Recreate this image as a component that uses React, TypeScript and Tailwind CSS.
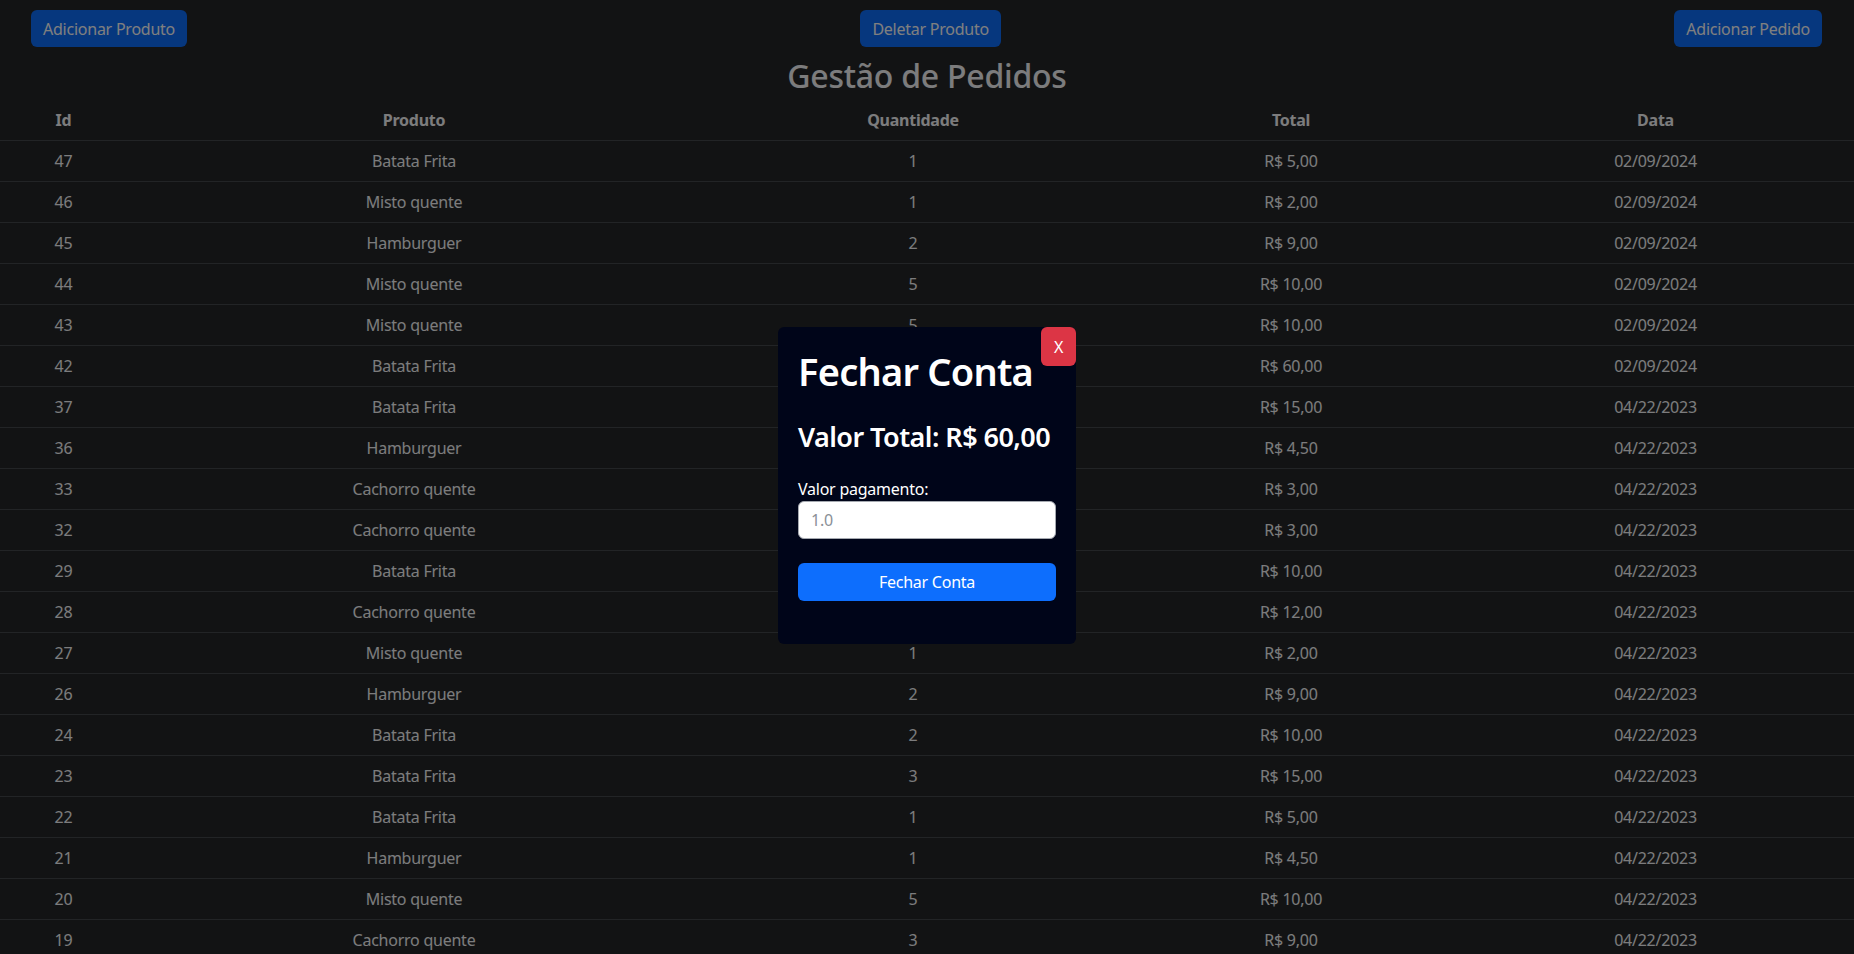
const pedidos = [
  { id: 47, produto: "Batata Frita", qtd: 1, total: "R$ 5,00", data: "02/09/2024" },
  { id: 46, produto: "Misto quente", qtd: 1, total: "R$ 2,00", data: "02/09/2024" },
  { id: 45, produto: "Hamburguer", qtd: 2, total: "R$ 9,00", data: "02/09/2024" },
  { id: 44, produto: "Misto quente", qtd: 5, total: "R$ 10,00", data: "02/09/2024" },
  { id: 43, produto: "Misto quente", qtd: 5, total: "R$ 10,00", data: "02/09/2024" },
  { id: 42, produto: "Batata Frita", qtd: 12, total: "R$ 60,00", data: "02/09/2024" },
  { id: 37, produto: "Batata Frita", qtd: 3, total: "R$ 15,00", data: "04/22/2023" },
  { id: 36, produto: "Hamburguer", qtd: 1, total: "R$ 4,50", data: "04/22/2023" },
  { id: 33, produto: "Cachorro quente", qtd: 1, total: "R$ 3,00", data: "04/22/2023" },
  { id: 32, produto: "Cachorro quente", qtd: 1, total: "R$ 3,00", data: "04/22/2023" },
  { id: 29, produto: "Batata Frita", qtd: 2, total: "R$ 10,00", data: "04/22/2023" },
  { id: 28, produto: "Cachorro quente", qtd: 4, total: "R$ 12,00", data: "04/22/2023" },
  { id: 27, produto: "Misto quente", qtd: 1, total: "R$ 2,00", data: "04/22/2023" },
  { id: 26, produto: "Hamburguer", qtd: 2, total: "R$ 9,00", data: "04/22/2023" },
  { id: 24, produto: "Batata Frita", qtd: 2, total: "R$ 10,00", data: "04/22/2023" },
  { id: 23, produto: "Batata Frita", qtd: 3, total: "R$ 15,00", data: "04/22/2023" },
  { id: 22, produto: "Batata Frita", qtd: 1, total: "R$ 5,00", data: "04/22/2023" },
  { id: 21, produto: "Hamburguer", qtd: 1, total: "R$ 4,50", data: "04/22/2023" },
  { id: 20, produto: "Misto quente", qtd: 5, total: "R$ 10,00", data: "04/22/2023" },
  { id: 19, produto: "Cachorro quente", qtd: 3, total: "R$ 9,00", data: "04/22/2023" },
  { id: 18, produto: "Batata Frita", qtd: 1, total: "R$ 5,00", data: "04/22/2023" },
];

const cols = "grid grid-cols-[127px_574px_424px_332px_1fr] text-center";

export default function App() {
  return (
    <div className="min-h-screen bg-[#242629] font-['Noto_Sans',sans-serif] text-[16px] leading-6 tracking-[-0.015em] text-[#f8f9fa]">
      <div className="flex justify-between pt-[10px] pl-[31px] pr-[32px]">
        <button className="h-[37px] rounded-md bg-[#0d6efd] px-3 text-white">Adicionar Produto</button>
        <button className="h-[37px] rounded-md bg-[#0d6efd] px-3 text-white">Deletar Produto</button>
        <button className="h-[37px] rounded-md bg-[#0d6efd] px-3 text-white">Adicionar Pedido</button>
      </div>

      <h2 className="mt-[10px] mb-[5px] text-center text-[32px] leading-[1.2] font-medium">Gestão de Pedidos</h2>

      <div className={`${cols} border-b border-[#45494d] py-2 font-bold`}>
        <div>Id</div>
        <div>Produto</div>
        <div>Quantidade</div>
        <div>Total</div>
        <div>Data</div>
      </div>
      {pedidos.map((p) => (
        <div key={p.id} className={`${cols} border-b border-[#45494d] py-2`}>
          <div>{p.id}</div>
          <div>{p.produto}</div>
          <div>{p.qtd}</div>
          <div>{p.total}</div>
          <div>{p.data}</div>
        </div>
      ))}

      {/* backdrop + modal */}
      <div className="fixed inset-0 bg-black/50">
        <div className="mx-auto mt-[327px] w-[298px]">
          <div className="relative rounded-md bg-[#000519] px-5 pt-5 pb-[43px] text-white">
            <button className="absolute top-0 right-0 flex h-[39px] w-[35px] items-center justify-center rounded-md bg-[#dc3545] text-white">
              X
            </button>
            <h1 className="text-[38px] leading-[48px] font-semibold tracking-[-0.02em]">Fechar Conta</h1>
            <h3 className="mt-[25px] text-[27px] leading-[34px] font-semibold whitespace-nowrap tracking-[-0.02em]">
              Valor Total: R$ 60,00
            </h3>
            <label className="mt-[23px] block">Valor pagamento:</label>
            <input
              className="block h-[38px] w-full rounded-md border border-[#a5a9b0] bg-white px-3 text-[#212529] placeholder:text-[#8a9097]"
              placeholder="1.0"
            />
            <button className="mt-6 h-[38px] w-full rounded-md bg-[#0d6efd] text-white">Fechar Conta</button>
          </div>
        </div>
      </div>
    </div>
  );
}
